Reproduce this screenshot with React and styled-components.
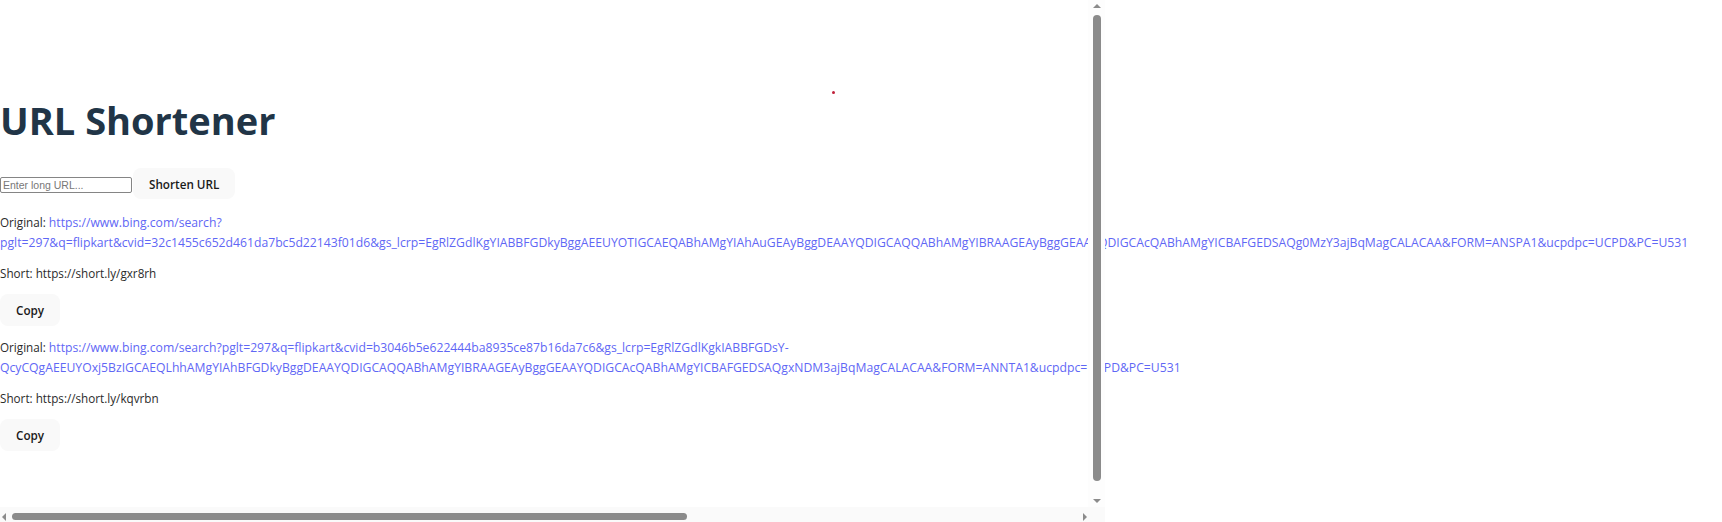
import React from 'react';
import styled, { createGlobalStyle } from 'styled-components';

const Global = createGlobalStyle`
  html, body {
    margin: 0;
    padding: 0;
    background: #ffffff;
  }
  body {
    font-family: "Open Sans", "Noto Sans", sans-serif;
    color: #2b2b2b;
  }
`;

const Page = styled.div`
  position: relative;
  width: 1722px;
  height: 522px;
  overflow: hidden;
`;

const Content = styled.main`
  display: flex;
  flex-direction: column;
  align-items: flex-start;
  width: 1093px;
  padding-top: 98px;
  font-size: 11.7px;
  line-height: 20px;
`;

const Title = styled.h1`
  margin: 0 0 26px;
  font-size: 38px;
  line-height: 44px;
  font-weight: 700;
  color: #213547;
`;

const Form = styled.div`
  display: flex;
  align-items: center;
  gap: 1px;
`;

const UrlInput = styled.input`
  box-sizing: border-box;
  width: 132px;
  height: 16px;
  margin-top: 3px;
  padding: 0 2px;
  border: 1px solid #858585;
  border-radius: 2px;
  font-family: "Liberation Sans", Arial, sans-serif;
  font-size: 10.5px;
  color: #222;
  &::placeholder {
    color: #777;
  }
`;

const Button = styled.button`
  box-sizing: border-box;
  height: ${(p) => (p.small ? '32px' : '31px')};
  padding: 0 15px;
  border: 1px solid transparent;
  border-radius: 8px;
  background: #f9f9f9;
  font-family: inherit;
  font-size: 11.7px;
  font-weight: 600;
  color: #1a1a1a;
  cursor: pointer;
`;

const List = styled.div`
  display: flex;
  flex-direction: column;
  gap: 11px;
  margin-top: 13px;
`;

const Entry = styled.div`
  display: flex;
  flex-direction: column;
  align-items: flex-start;
  gap: 11px;
`;

const Line = styled.p`
  margin: 0;
`;

const Link = styled.a`
  color: #5f67f5;
  font-size: 12.2px;
  line-height: 1;
  font-weight: 500;
  text-decoration: none;
`;

const VScrollbar = styled.div`
  position: absolute;
  left: 1088px;
  top: 0;
  box-sizing: border-box;
  width: 17px;
  height: 507px;
  padding: 4px 0;
  display: flex;
  flex-direction: column;
  align-items: center;
  gap: 7px;
  background: #fdfdfd;
`;

const HScrollbar = styled.div`
  position: absolute;
  left: 0;
  top: 507px;
  box-sizing: border-box;
  width: 1105px;
  height: 15px;
  padding: 4px 18px 0 2px;
  display: flex;
  align-items: center;
  gap: 6px;
  background: #fafafa;
`;

const Thumb = styled.div`
  flex: none;
  background: #8b8b8b;
  border-radius: 4px;
  width: ${(p) => (p.horizontal ? '675px' : '8px')};
  height: ${(p) => (p.horizontal ? '7px' : '466px')};
`;

const Arrow = styled.div`
  flex: none;
  width: 0;
  height: 0;
  border: 4px solid transparent;
  ${(p) => p.dir === 'up' && `border-bottom-color: #8b8b8b; border-top-width: 0;`}
  ${(p) => p.dir === 'down' && `border-top-color: #8b8b8b; border-bottom-width: 0; margin-top: auto;`}
  ${(p) => p.dir === 'left' && `border-right-color: #8b8b8b; border-left-width: 0;`}
  ${(p) => p.dir === 'right' && `border-left-color: #8b8b8b; border-right-width: 0; margin-left: auto;`}
`;

const Dot = styled.div`
  position: absolute;
  left: 832px;
  top: 91px;
  width: 3px;
  height: 3px;
  border-radius: 50%;
  background: #c0203a;
`;

const urls = [
  {
    original:
      'https://www.bing.com/search?pglt=297&q=flipkart&cvid=32c1455c652d461da7bc5d22143f01d6&gs_lcrp=EgRlZGdlKgYIABBFGDkyBggAEEUYOTIGCAEQABhAMgYIAhAuGEAyBggDEAAYQDIGCAQQABhAMgYIBRAAGEAyBggGEAAYQDIGCAcQABhAMgYICBAFGEDSAQg0MzY3ajBqMagCALACAA&FORM=ANSPA1&ucpdpc=UCPD&PC=U531',
    short: 'https://short.ly/gxr8rh',
  },
  {
    original:
      'https://www.bing.com/search?pglt=297&q=flipkart&cvid=b3046b5e622444ba8935ce87b16da7c6&gs_lcrp=EgRlZGdlKgkIABBFGDsY-QcyCQgAEEUYOxj5BzIGCAEQLhhAMgYIAhBFGDkyBggDEAAYQDIGCAQQABhAMgYIBRAAGEAyBggGEAAYQDIGCAcQABhAMgYICBAFGEDSAQgxNDM3ajBqMagCALACAA&FORM=ANNTA1&ucpdpc=UCPD&PC=U531',
    short: 'https://short.ly/kqvrbn',
  },
];

export default function App() {
  return (
    <Page>
      <Global />
      <Content>
        <Title>URL Shortener</Title>
        <Form>
          <UrlInput placeholder="Enter long URL..." />
          <Button>Shorten URL</Button>
        </Form>
        <List>
          {urls.map((u) => (
            <Entry key={u.short}>
              <Line>
                Original: <Link href="#">{u.original}</Link>
              </Line>
              <Line>Short: {u.short}</Line>
              <Button small>Copy</Button>
            </Entry>
          ))}
        </List>
      </Content>
      <Dot />
      <VScrollbar>
        <Arrow dir="up" />
        <Thumb />
        <Arrow dir="down" />
      </VScrollbar>
      <HScrollbar>
        <Arrow dir="left" />
        <Thumb horizontal />
        <Arrow dir="right" />
      </HScrollbar>
    </Page>
  );
}
